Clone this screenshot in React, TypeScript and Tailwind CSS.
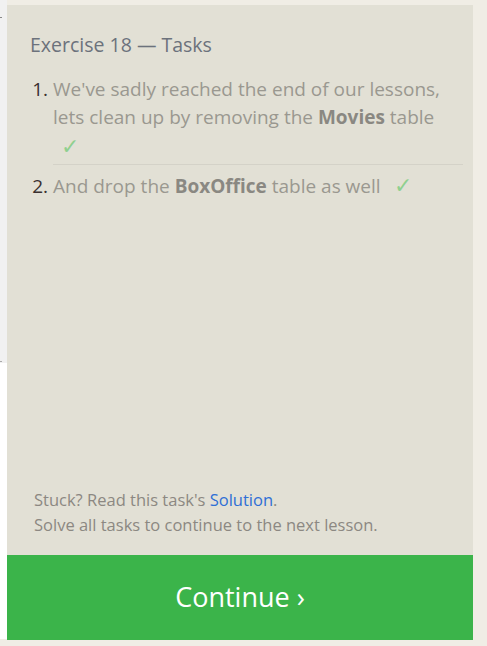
const tasks = [
  { before: "We've sadly reached the end of our lessons, lets clean up by removing the ", bold: 'Movies', after: ' table' },
  { before: 'And drop the ', bold: 'BoxOffice', after: ' table as well' },
]

function Check() {
  return <span className="ml-[8px] inline-block w-[18px] text-[22px] leading-[28px] text-[#8fd08f]">✓</span>
}

export default function App() {
  return (
    <div
      className="flex h-[646px] w-[487px] bg-[#f0ede5]"
      style={{ fontFamily: '"Open Sans", "Noto Sans", sans-serif' }}
    >
      <div className="flex w-[7px] flex-col">
        <div className="relative h-[363px] bg-[#f1f1f1]">
          <span className="absolute left-0 top-[17px] h-px w-[2px] bg-[#888]" />
          <span className="absolute left-0 top-[361px] h-px w-[2px] bg-[#aaa]" />
        </div>
        <div className="h-[276px] bg-white" />
      </div>

      <div className="mt-[5px] flex h-[635px] w-[466px] flex-col bg-[#e2e0d5]">
        <div className="flex-1 pl-[23px] pr-[10px] pt-[27px]">
          <h2 className="text-[19.5px] leading-[25px] text-[#6c727c]">Exercise 18 — Tasks</h2>
          <ol className="mt-[18px] list-decimal pl-[23px] text-[19px] leading-[28px] text-[#9a9890] marker:text-[#3a3030]">
            {tasks.map((t, i) => (
              <li
                key={i}
                className={i === 0 ? 'border-b border-[#d4d2c8] pb-[3px]' : 'pt-[5px]'}
              >
                {t.before}
                <b className="font-bold text-[#8a8882]">{t.bold}</b>
                {t.after}{' '}
                <Check />
              </li>
            ))}
          </ol>
        </div>

        <div className="pb-[18px] pl-[27px] text-[16.5px] leading-[25px] text-[#8c8882]">
          <p>
            Stuck? Read this task's <a className="text-[#2f6fd6]">Solution</a>.
          </p>
          <p>Solve all tasks to continue to the next lesson.</p>
        </div>

        <button
          type="button"
          className="flex h-[85px] w-full items-center justify-center bg-[#3bb44a] text-[27px] text-white"
        >
          Continue ›
        </button>
      </div>
    </div>
  )
}
